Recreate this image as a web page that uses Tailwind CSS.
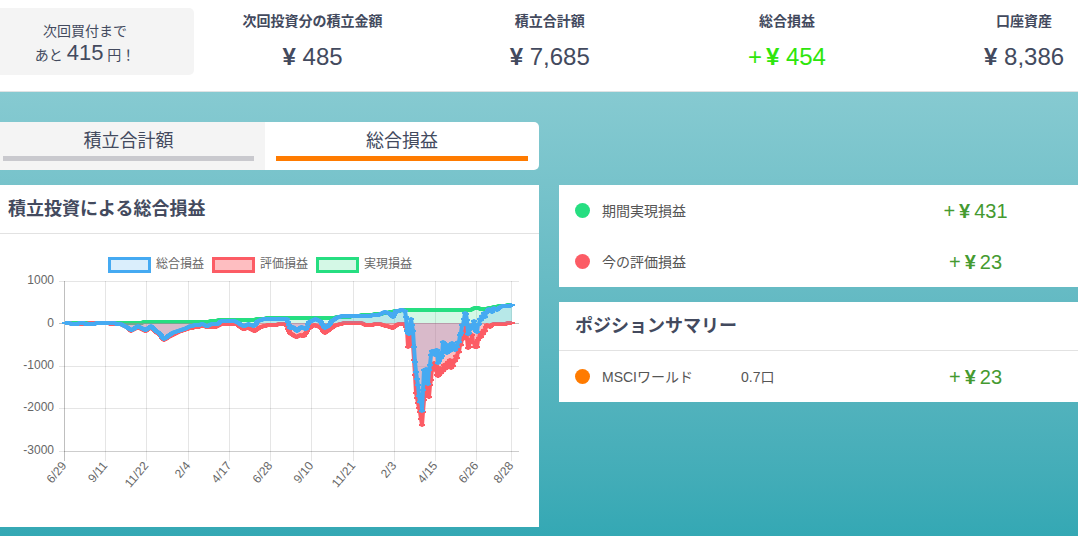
<!DOCTYPE html>
<html lang="ja">
<head>
    <meta charset="utf-8">
    <meta name="viewport" content="width=device-width, initial-scale=1">
    <title>積立投資</title>
    <script src="https://cdn.jsdelivr.net/npm/@tailwindcss/browser@4"></script>
</head>
<body class="min-h-screen flex flex-col bg-white font-['Liberation_Sans','Noto_Sans_CJK_JP',sans-serif] text-sm text-[#434a5e]">

<header class="grid grid-cols-[18%_22%_22%_22%_22%] pt-2 pb-4 border-b border-[#dfe3e4] text-center overflow-hidden">
    <div class="bg-[#f4f4f4] rounded-r-[5px] pt-1 pr-6 flex flex-col justify-center">
        <p class="leading-5">次回買付まで</p>
        <p class="leading-6 whitespace-nowrap">あと <span class="text-[22px]">415</span> 円！</p>
    </div>
    <div>
        <h2 class="font-bold leading-[26px]">次回投資分の積立金額</h2>
        <p class="mt-1 text-2xl leading-[37px]"><b>¥</b> 485</p>
    </div>
    <div>
        <h2 class="font-bold leading-[26px]">積立合計額</h2>
        <p class="mt-1 text-2xl leading-[37px]"><b>¥</b> 7,685</p>
    </div>
    <div>
        <h2 class="font-bold leading-[26px]">総合損益</h2>
        <p class="mt-1 text-2xl leading-[37px] text-[#2ee60c]">+<b class="ml-1">¥</b> 454</p>
    </div>
    <div>
        <h2 class="font-bold leading-[26px]">口座資産</h2>
        <p class="mt-1 text-2xl leading-[37px]"><b>¥</b> 8,386</p>
    </div>
</header>

<main class="grow bg-linear-to-b from-[#86cad1] to-[#34a8b4] pt-[30px] pb-[9px]">
    <div class="w-1/2 grid grid-cols-[265fr_274fr] rounded-r-[5px] overflow-hidden text-lg text-center">
        <button type="button" class="bg-[#f4f4f4] pt-1 pb-[9px] pl-[3px] pr-[11px]">
            <span class="block leading-[30px]">積立合計額</span>
            <span class="block h-[5px] bg-[#c9c9ce]"></span>
        </button>
        <button type="button" class="bg-white pt-1 pb-[9px] px-[11px]">
            <span class="block leading-[30px]">総合損益</span>
            <span class="block h-[5px] bg-[#ff7b00]"></span>
        </button>
    </div>

    <div class="flex items-start gap-5 mt-[15px]">
        <section class="w-1/2 bg-white">
            <h2 class="h-[49px] pl-2 border-b border-[#e2e2e2] text-lg leading-[48px] font-bold">積立投資による総合損益</h2>
            <svg viewBox="0 234 539 293" class="block w-full text-xs" fill="#666">
                <defs>
                    <marker id="dot-green" markerUnits="userSpaceOnUse" markerWidth="6" markerHeight="2" refX="3" refY="1"><path d="M0 0h6v2H0z" fill="#26de81"/></marker>
                    <marker id="dot-red" markerUnits="userSpaceOnUse" markerWidth="6" markerHeight="2" refX="3" refY="1"><path d="M0 0h6v2H0z" fill="#fc5c65"/></marker>
                    <marker id="dot-blue" markerUnits="userSpaceOnUse" markerWidth="6" markerHeight="2" refX="3" refY="1"><path d="M0 0h6v2H0z" fill="#45aaf2"/></marker>
                </defs>

                <!-- legend -->
                <g stroke-width="3">
                    <rect x="109.500" y="258.500" width="40" height="13" fill="#daeefc" stroke="#45aaf2"/>
                    <rect x="213.500" y="258.500" width="40" height="13" fill="#febec1" stroke="#fc5c65"/>
                    <rect x="317.500" y="258.500" width="40" height="13" fill="#d4f8e6" stroke="#26de81"/>
                </g>
                <text x="156" y="268">総合損益</text>
                <text x="260" y="268">評価損益</text>
                <text x="364" y="268">実現損益</text>

                <!-- grid -->
                <path fill="none" stroke="#000" stroke-opacity=".1" d="M59 281.500H519M59 366.500H519M59 408.500H519M59 451.500H519M105.500 281V461M146.500 281V461M188.500 281V461M229.500 281V461M270.500 281V461M311.500 281V461M353.500 281V461M394.500 281V461M435.500 281V461M476.500 281V461M511.500 281V461"/>
                <path fill="none" stroke="#000" stroke-opacity=".25" d="M59 323.500H519M64.500 281V461"/>
                <path fill="none" stroke="#000" stroke-opacity=".1" d="M64 451.500H519"/>

                <g id="series"></g>

                <g text-anchor="end">
                    <text x="54" y="284">1000</text>
                    <text x="54" y="327">0</text>
                    <text x="54" y="369">-1000</text>
                    <text x="54" y="411">-2000</text>
                    <text x="54" y="454">-3000</text>
                    <text transform="translate(67 466) rotate(-50)">6/29</text>
                    <text transform="translate(108 466) rotate(-50)">9/11</text>
                    <text transform="translate(149 466) rotate(-50)">11/22</text>
                    <text transform="translate(191 466) rotate(-50)">2/4</text>
                    <text transform="translate(232 466) rotate(-50)">4/17</text>
                    <text transform="translate(273 466) rotate(-50)">6/28</text>
                    <text transform="translate(314 466) rotate(-50)">9/10</text>
                    <text transform="translate(356 466) rotate(-50)">11/21</text>
                    <text transform="translate(397 466) rotate(-50)">2/3</text>
                    <text transform="translate(438 466) rotate(-50)">4/15</text>
                    <text transform="translate(479 466) rotate(-50)">6/26</text>
                    <text transform="translate(514 466) rotate(-50)">8/28</text>
                </g>
            </svg>
        </section>

        <div class="flex-1">
            <table class="w-full table-fixed bg-white text-[#555]">
                <tbody>
                    <tr class="h-[51px]">
                        <td class="w-[43px] pl-4"><span class="block size-[15px] rounded-full bg-[#26de81]"></span></td>
                        <th scope="row" class="text-left font-normal">期間実現損益</th>
                        <td class="w-[205px] text-center text-xl text-[#459a30]">+<b class="mx-1">¥</b>431</td>
                    </tr>
                    <tr class="h-[51px]">
                        <td class="pl-4"><span class="block size-[15px] rounded-full bg-[#fc5c65]"></span></td>
                        <th scope="row" class="text-left font-normal">今の評価損益</th>
                        <td class="text-center text-xl text-[#459a30]">+<b class="mx-1">¥</b>23</td>
                    </tr>
                </tbody>
            </table>

            <section class="mt-[15px] bg-white">
                <h2 class="h-[49px] pl-4 border-b border-[#e2e2e2] text-lg leading-[48px] font-bold">ポジションサマリー</h2>
                <table class="w-full table-fixed text-[#555]">
                    <tbody>
                        <tr class="h-[51px]">
                            <td class="w-[43px] pl-4"><span class="block size-[15px] rounded-full bg-[#ff7b00]"></span></td>
                            <th scope="row" class="w-[139px] text-left font-normal">MSCIワールド</th>
                            <td>0.7口</td>
                            <td class="w-[205px] text-center text-xl text-[#459a30]">+<b class="mx-1">¥</b>23</td>
                        </tr>
                    </tbody>
                </table>
            </section>
        </div>
    </div>
</main>

<script>
    (() => {
        const ZERO = 323;
        const series = [
            {
                color: '#26de81', opacity: .2, marker: 'dot-green', swing: 0,
                points: '65,323 120,323 165,322 205,322 222,320 250,320 270,318 325,318 345,317 366,315 380,314 396,311 405,310 470,310 475,308 485,309 500,306 512,305'
            },
            {
                color: '#fc5c65', opacity: .4, marker: 'dot-red', swing: 3,
                points: '65,323 77,324 100,323 120,324 127,327 131,331 138,327 146,331 151,327 155,331 160,335 164,340 168,337 178,332 190,328 203,326 209,327 215,327 222,324 237,324 243,329 248,328 255,331 260,327 268,325 286,324 290,333 296,337 300,335 304,336 308,329 314,325 320,327 325,333 330,329 336,325 345,323 362,323 366,325 380,324 393,328 398,324 405,324 407,330 408,347 410,340 412,330 413,345 415,375 416,393 418,403 420,412 422,425 423,412 424,400 425,385 427,390 428,396 429,397 430,385 432,368 435,365 438,376 440,368 442,371 444,365 447,368 449,362 452,366 454,360 456,356 459,352 460,345 462,338 464,333 466,323 468,348 470,340 472,335 474,343 477,347 479,338 482,332 484,330 487,325 490,327 493,324 500,324 512,323'
            },
            {
                color: '#45aaf2', opacity: .2, marker: 'dot-blue', swing: 3,
                points: '65,323 77,324 80,323 90,324 100,323 112,323 120,324 127,327 131,330 135,328 138,326 142,328 146,330 151,326 155,330 160,334 164,339 168,336 172,333 178,331 184,329 190,326 197,325 203,324 207,326 212,324 218,324 221,321 235,321 240,324 244,326 248,324 254,326 258,321 264,319 287,319 290,328 293,327 297,331 301,327 306,329 309,322 315,319 320,321 325,328 328,326 332,321 336,318 342,316 364,316 378,315 384,312 389,313 393,317 396,311 402,310 405,311 406,317 407,331 409,334 411,319 413,331 414,347 415,362 416,372 418,385 419,396 420,402 421,395 422,411 423,390 424,370 425,378 426,369 427,383 428,384 429,370 430,365 431,355 433,352 435,355 437,350 438,363 440,353 442,356 443,342 445,350 447,353 448,345 450,351 452,343 454,349 456,345 458,342 460,335 462,325 464,319 465,313 467,320 468,334 470,326 472,325 474,321 476,331 477,332 479,324 481,320 483,317 486,313 489,309 492,312 494,308 497,310 500,307 503,306 508,306 512,305'
            }
        ];

        const daily = (item) => {
            const given = item.points.split(' ').map(pair => pair.split(',').map(Number));
            const days = [];
            given.forEach(([x, y], i) => {
                days.push([x, y]);
                if (!given[i + 1]) {
                    return;
                }
                const [nextX, nextY] = given[i + 1];
                for (let at = x + 1; at < nextX; at++) {
                    let value = y + (nextY - y) * (at - x) / (nextX - x);
                    if (at > 424 && at < 486) {
                        value += at % 2 ? item.swing : -item.swing;
                    }
                    days.push([at, Math.round(value)]);
                }
            });
            return days;
        };

        const add = (attrs) => {
            const path = document.createElementNS('http://www.w3.org/2000/svg', 'path');
            Object.keys(attrs).forEach(key => path.setAttribute(key, attrs[key]));
            document.getElementById('series').append(path);
        };

        series.forEach(item => {
            const line = 'M' + daily(item).join('L');
            add({d: `${line}L512,${ZERO}L65,${ZERO}Z`, fill: item.color, 'fill-opacity': item.opacity});
            add({
                d: line,
                fill: 'none',
                stroke: item.color,
                'stroke-width': 4,
                'stroke-linejoin': 'round',
                'marker-start': `url(#${item.marker})`,
                'marker-mid': `url(#${item.marker})`,
                'marker-end': `url(#${item.marker})`
            });
        });
    })();
</script>
</body>
</html>
